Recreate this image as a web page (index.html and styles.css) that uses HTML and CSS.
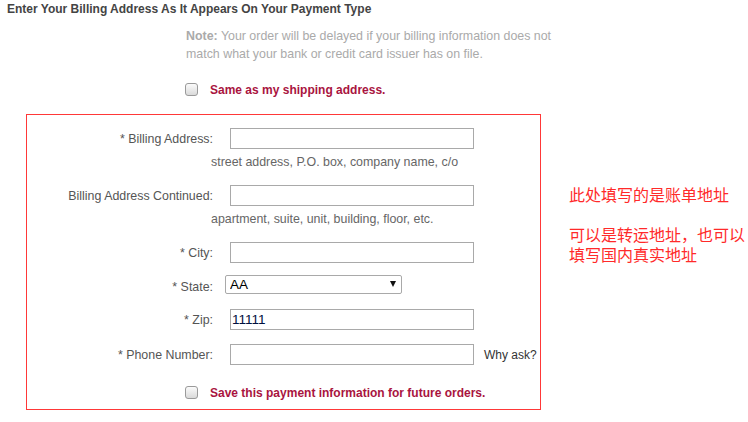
FILE: index.html
```html
<!DOCTYPE html>
<html>
<head>
<meta charset="utf-8">
<title>Billing Address</title>
<link rel="stylesheet" href="styles.css">
</head>
<body>
<h1 class="title">Enter Your Billing Address As It Appears On Your Payment Type</h1>
<p class="note"><b>Note:</b> Your order will be delayed if your billing information does not<br>match what your bank or credit card issuer has on file.</p>
<label class="check-row top-check"><input type="checkbox" class="cb"><span>Same as my shipping address.</span></label>
<div class="main">
  <div class="box">
    <div class="row r1"><span class="lbl">* Billing Address:</span><input class="field" type="text"></div>
    <div class="hint">street address, P.O. box, company name, c/o</div>
    <div class="row r2"><span class="lbl">Billing Address Continued:</span><input class="field" type="text"></div>
    <div class="hint">apartment, suite, unit, building, floor, etc.</div>
    <div class="row r3"><span class="lbl">* City:</span><input class="field" type="text"></div>
    <div class="row r4"><span class="lbl lbl-low">* State:</span><span class="sel"><select class="select"><option>AA</option></select></span></div>
    <div class="row r5"><span class="lbl">* Zip:</span><input class="field" type="text" value="11111"></div>
    <div class="row r6"><span class="lbl">* Phone Number:</span><input class="field" type="text"><span class="why">Why ask?</span></div>
    <label class="check-row save"><input type="checkbox" class="cb"><span>Save this payment information for future orders.</span></label>
  </div>
  <div class="aside">
    <div class="cn">此处填写的是账单地址</div>
    <div class="cn gap">可以是转运地址，也可以</div>
    <div class="cn">填写国内真实地址</div>
  </div>
</div>
</body>
</html>
```
FILE: styles.css
```css
body {
  margin: 0;
  font-family: "Liberation Sans", Arial, sans-serif;
  font-size: 12.4px;
  line-height: 18px;
  background: #fff;
  color: #555;
}
.title {
  margin: 0;
  padding-left: 7px;
  font-size: 12px;
  font-weight: bold;
  color: #444;
  line-height: 18px;
}
.note {
  margin: 9px 0 0 186px;
  color: #aaa;
  line-height: 18px;
}
.check-row {
  display: flex;
  align-items: center;
  height: 18px;
  font-size: 12px;
  font-weight: bold;
  color: #a91440;
}
.check-row span {
  position: relative;
  top: 1px;
}
.top-check {
  margin: 17px 0 0 185px;
}
.cb {
  appearance: none;
  -webkit-appearance: none;
  width: 13px;
  height: 13px;
  margin: 0 12px 0 0;
  border: 1px solid #9a9a9a;
  border-radius: 3px;
  background: linear-gradient(#fbfbfb, #dadada);
  box-sizing: border-box;
}
.main {
  display: flex;
  align-items: flex-start;
  margin-top: 16px;
}
.box {
  margin-left: 26px;
  width: 515px;
  box-sizing: border-box;
  border: 1px solid #ff3838;
  padding: 13px 0 8px;
}
.row {
  display: flex;
  align-items: center;
}
.lbl {
  width: 186px;
  text-align: right;
  margin-right: 17px;
  color: #555;
}
.lbl-low {
  position: relative;
  top: 2px;
}
.field {
  width: 244px;
  height: 21px;
  box-sizing: border-box;
  border: 1px solid #a9a9a9;
  padding: 0 1px;
  margin: 0;
  font: 13.5px "Liberation Sans", Arial, sans-serif;
  color: #001040;
  outline: none;
}
.hint {
  padding-left: 184px;
  margin-top: 4px;
  color: #666;
}
.r2, .r3 { margin-top: 14px; }
.r4 { margin-top: 12px; }
.r5 { margin-top: 15px; }
.r6 { margin-top: 14px; }
.sel {
  position: relative;
  display: block;
  margin-left: -5px;
  height: 19px;
}
.select {
  appearance: none;
  -webkit-appearance: none;
  display: block;
  width: 177px;
  height: 19px;
  box-sizing: border-box;
  border: 1px solid #a9a9a9;
  border-radius: 2px;
  padding: 0 0 0 4px;
  margin: 0;
  font: 13.5px "Liberation Sans", Arial, sans-serif;
  color: #000;
  background: #fff;
}
.sel::after {
  content: "";
  position: absolute;
  right: 6px;
  top: 6px;
  border-left: 3px solid transparent;
  border-right: 3px solid transparent;
  border-top: 6px solid #111;
}
.why {
  margin-left: 10px;
  font-size: 12px;
  color: #333;
}
.save {
  margin-top: 18px;
  padding-left: 158px;
}
.aside {
  margin: 70px 0 0 28px;
  font-family: "Noto Sans CJK SC", sans-serif;
  font-size: 16px;
  color: #ff2a2a;
  white-space: nowrap;
}
.cn {
  height: 20px;
  line-height: 20px;
}
.cn.gap {
  margin-top: 20px;
}
```
